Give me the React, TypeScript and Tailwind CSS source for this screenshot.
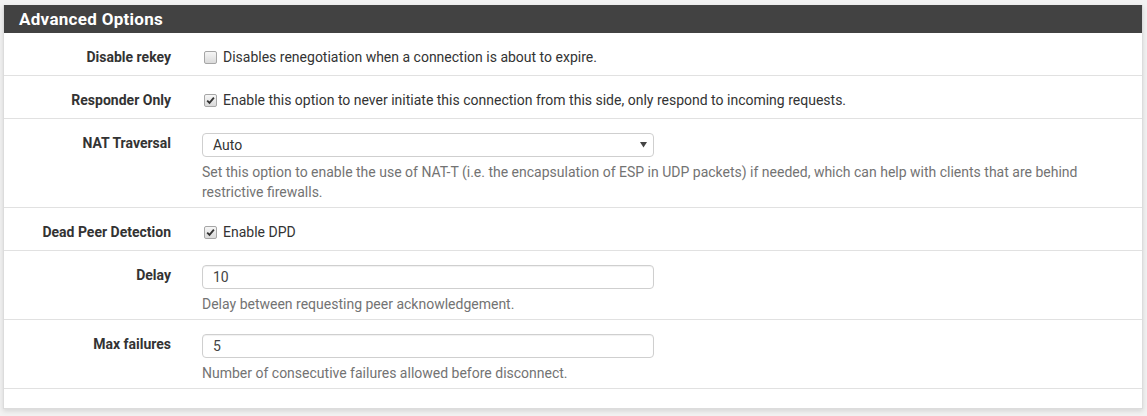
import type { ReactNode } from "react";

function Checkbox({ checked }: { checked?: boolean }) {
  return (
    <span className="ml-[2px] mr-[6px] flex h-[13px] w-[13px] shrink-0 items-center justify-center rounded-[2px] border border-[#a6a6a6] bg-gradient-to-b from-[#f6f6f6] to-[#dadada]">
      {checked && (
        <svg width="9" height="9" viewBox="0 0 9 9">
          <path d="M1.2 4.6 L3.5 6.9 L7.9 1.6" fill="none" stroke="#333" strokeWidth="1.8" />
        </svg>
      )}
    </span>
  );
}

function Row({ label, children, pb = "pb-[8px]" }: { label: string; children: ReactNode; pb?: string }) {
  return (
    <div className={`flex border-b border-[#e1e1e1] pt-[14px] ${pb}`}>
      <div className="w-[183px] shrink-0 pr-[16px] text-right text-[14px] font-bold leading-[20px] text-[#333]">
        {label}
      </div>
      <div className="min-w-0 flex-1 pl-[15px] pr-[15px]">{children}</div>
    </div>
  );
}

function CheckLine({ checked, text }: { checked?: boolean; text: string }) {
  return (
    <div className="flex h-[20px] items-center text-[14px] text-[#333]">
      <Checkbox checked={checked} />
      <span>{text}</span>
    </div>
  );
}

function Help({ children }: { children: ReactNode }) {
  return <div className="mt-[5px] text-[14px] leading-[20px] text-[#737373]">{children}</div>;
}

function TextBox({ value }: { value: string }) {
  return (
    <div className="flex h-[24px] w-[452px] items-center rounded-[4px] border border-[#cfcfcf] bg-white px-[10px] text-[14px] text-[#444] shadow-[inset_0_1px_1px_rgba(0,0,0,0.06)]">
      {value}
    </div>
  );
}

export default function App() {
  return (
    <div className="h-[416px] w-[1147px] bg-[#f2f2f2] px-[3px] pt-[5px] font-['Roboto',sans-serif]">
      <div className="w-[1140px] border-x border-b border-[#dcdcdc] bg-white shadow-[0_2px_5px_rgba(0,0,0,0.12)]">
        <div className="h-[28px] bg-[#424242] px-[15px] text-[17px] font-bold leading-[28px] tracking-[0.3px] text-white">
          Advanced Options
        </div>

        <Row label="Disable rekey">
          <CheckLine text="Disables renegotiation when a connection is about to expire." />
        </Row>

        <Row label="Responder Only">
          <CheckLine checked text="Enable this option to never initiate this connection from this side, only respond to incoming requests." />
        </Row>

        <Row label="NAT Traversal" pb="pb-[5px]">
          <div className="flex h-[24px] w-[452px] items-center justify-between rounded-[4px] border border-[#cfcfcf] bg-white pl-[10px] pr-[6px] text-[14px] text-[#333]">
            <span>Auto</span>
            <svg width="7" height="6" viewBox="0 0 7 6">
              <path d="M0 0 H7 L3.5 5.5 Z" fill="#444" />
            </svg>
          </div>
          <Help>
            Set this option to enable the use of NAT-T (i.e. the encapsulation of ESP in UDP packets) if needed, which can help with clients that are behind restrictive firewalls.
          </Help>
        </Row>

        <Row label="Dead Peer Detection">
          <CheckLine checked text="Enable DPD" />
        </Row>

        <Row label="Delay" pb="pb-[5px]">
          <TextBox value="10" />
          <Help>Delay between requesting peer acknowledgement.</Help>
        </Row>

        <Row label="Max failures" pb="pb-[5px]">
          <TextBox value="5" />
          <Help>Number of consecutive failures allowed before disconnect.</Help>
        </Row>

        <div className="h-[19px]" />
      </div>
    </div>
  );
}
